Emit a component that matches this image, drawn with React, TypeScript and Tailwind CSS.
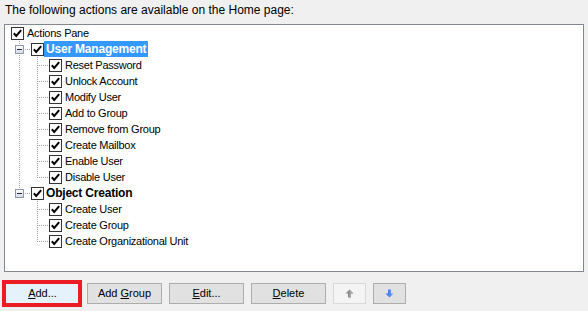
import React from 'react'

type Item = { label: string; bold?: boolean; selected?: boolean; children?: string[] }

const GROUPS: Item[] = [
  {
    label: 'User Management',
    bold: true,
    selected: true,
    children: ['Reset Password', 'Unlock Account', 'Modify User', 'Add to Group', 'Remove from Group', 'Create Mailbox', 'Enable User', 'Disable User'],
  },
  {
    label: 'Object Creation',
    bold: true,
    children: ['Create User', 'Create Group', 'Create Organizational Unit'],
  },
]

const DOT = '#a0a0a0'

function CheckBox() {
  return (
    <svg width="13" height="13" viewBox="0 0 13 13" className="shrink-0 mt-[2px] self-start">
      <rect x="0.5" y="0.5" width="12" height="12" fill="#fff" stroke="#333" />
      <path d="M2.8 6.3 L5.2 8.9 L10.2 3.2" fill="none" stroke="#000" strokeWidth="2" />
    </svg>
  )
}

function GroupGutter({ last }: { last: boolean }) {
  return (
    <svg width="26" height="16" viewBox="0 0 26 16" className="shrink-0">
      <defs>
        <linearGradient id="exp" x1="0" y1="0" x2="0" y2="1">
          <stop offset="0" stopColor="#ffffff" />
          <stop offset="1" stopColor="#d4d8de" />
        </linearGradient>
      </defs>
      <line x1="14.5" y1="0" x2="14.5" y2="4" stroke={DOT} strokeDasharray="1 1" />
      {!last && <line x1="14.5" y1="13" x2="14.5" y2="16" stroke={DOT} strokeDasharray="1 1" strokeDashoffset="1" />}
      <rect x="10.5" y="4.5" width="8" height="8" fill="url(#exp)" stroke="#8e99a8" />
      <line x1="12" y1="8.5" x2="17" y2="8.5" stroke="#1c2a44" />
      <line x1="20" y1="8.5" x2="26" y2="8.5" stroke={DOT} strokeDasharray="1 1" />
    </svg>
  )
}

function ChildGutter({ outer, last }: { outer: boolean; last: boolean }) {
  return (
    <svg width="44" height="16" viewBox="0 0 44 16" className="shrink-0">
      {outer && <line x1="14.5" y1="0" x2="14.5" y2="16" stroke={DOT} strokeDasharray="1 1" />}
      <line x1="32.5" y1="0" x2="32.5" y2={last ? 9 : 16} stroke={DOT} strokeDasharray="1 1" />
      <line x1="34" y1="8.5" x2="44" y2="8.5" stroke={DOT} strokeDasharray="1 1" />
    </svg>
  )
}

function Btn({ children, wide = true, disabled = false, hot = false }: { children: React.ReactNode; wide?: boolean; disabled?: boolean; hot?: boolean }) {
  const tone = hot
    ? 'bg-[#e5f1fb] border-[#0078d7]'
    : disabled
      ? 'bg-[#f4f4f4] border-[#d9d9d9]'
      : 'bg-[#e1e1e1] border-[#adadad]'
  return (
    <button className={`${wide ? 'w-[75px]' : 'w-[33px]'} h-[21px] border ${tone} flex items-center justify-center text-[11px] text-black leading-none`}>
      {children}
    </button>
  )
}

function UpArrow() {
  return (
    <svg width="9" height="9" viewBox="0 0 9 9">
      <path d="M4.5 0.5 L8.5 4.5 L6 4.5 L6 8.5 L3 8.5 L3 4.5 L0.5 4.5 Z" fill="#8a8a8a" />
      <path d="M4.5 1.5 L4.5 8.5 L6 8.5 L6 4.5 L8 4.5 Z" fill="#a8a8a8" />
    </svg>
  )
}

function DownArrow() {
  return (
    <svg width="9" height="9" viewBox="0 0 9 9">
      <defs>
        <linearGradient id="dn" x1="0" y1="0" x2="1" y2="0">
          <stop offset="0" stopColor="#2f6fd8" />
          <stop offset="1" stopColor="#6fa6f2" />
        </linearGradient>
      </defs>
      <path d="M3 0.5 L6 0.5 L6 4.5 L8.5 4.5 L4.5 8.5 L0.5 4.5 L3 4.5 Z" fill="url(#dn)" />
    </svg>
  )
}

export default function App() {
  return (
    <div className="w-[588px] h-[311px] bg-[#f0f0f0] text-black text-[11px] overflow-hidden" style={{ fontFamily: '"Liberation Sans", Arial, sans-serif' }}>
      <div className="h-[24px] pl-[5px] pt-[2px] text-[12px] leading-4">The following actions are available on the Home page:</div>

      <div className="ml-[4px] w-[580px] h-[248px] border border-[#828790] bg-white leading-4">
        {/* root */}
        <div className="flex h-4 pl-[6px]">
          <CheckBox />
          <span className="ml-[3px] tracking-[-0.25px]">Actions Pane</span>
        </div>

        {GROUPS.map((g, gi) => {
          const lastGroup = gi === GROUPS.length - 1
          return (
            <div key={g.label}>
              <div className="flex h-4">
                <GroupGutter last={lastGroup} />
                <CheckBox />
                <span className={`h-4 px-[2px] text-[12px] tracking-[-0.2px] font-bold ${g.selected ? 'bg-[#3399ff] text-white' : ''}`}>{g.label}</span>
              </div>
              {g.children?.map((c, ci) => (
                <div key={c} className="flex h-4">
                  <ChildGutter outer={!lastGroup} last={ci === g.children!.length - 1} />
                  <CheckBox />
                  <span className="ml-[3px] tracking-[-0.25px]">{c}</span>
                </div>
              ))}
            </div>
          )
        })}
      </div>

      <div className="flex gap-[7px] pl-[5px] mt-[11px]">
        <div className="relative">
          <Btn hot>
            <span><span className="underline">A</span>dd...</span>
          </Btn>
          <div className="absolute -top-[3px] -bottom-[3px] -left-[3px] -right-[2px] border-4 border-[#ec1c24] pointer-events-none" />
        </div>
        <Btn>
          <span>Add <span className="underline">G</span>roup</span>
        </Btn>
        <Btn>
          <span><span className="underline">E</span>dit...</span>
        </Btn>
        <Btn>
          <span><span className="underline">D</span>elete</span>
        </Btn>
        <Btn wide={false} disabled>
          <UpArrow />
        </Btn>
        <Btn wide={false}>
          <DownArrow />
        </Btn>
      </div>
    </div>
  )
}
